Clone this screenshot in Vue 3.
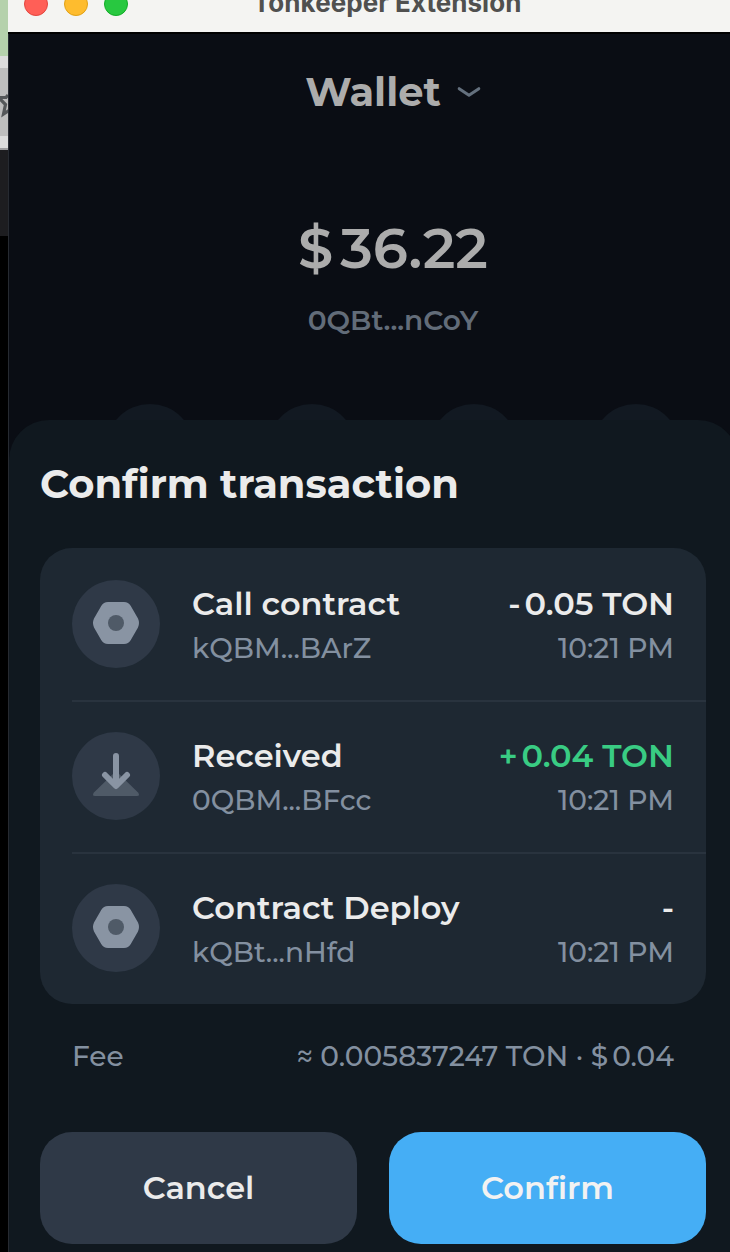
<script setup>
const circles = [1, 2, 3, 4]
const actions = [
  { icon: 'contract', title: 'Call contract', address: 'kQBM...BArZ', sign: '-', amount: '0.05 TON', kind: 'call' },
  { icon: 'receive', title: 'Received', address: '0QBM...BFcc', sign: '+', amount: '0.04 TON', kind: 'received' },
  { icon: 'contract', title: 'Contract Deploy', address: 'kQBt...nHfd', sign: '-', amount: '', kind: 'deploy' },
]
</script>

<template>
  <div class="desktop">
    <div class="backdrop">
      <div class="tabs"></div>
      <div class="toolbar">
        <svg width="8" height="68" viewBox="0 0 8 68"><path d="M-3 29.500 H6 L8 27 M0 31 L5.500 36.500 L3.500 46 L9 42.500" fill="none" stroke="#55585a" stroke-width="3.2" /></svg>
      </div>
      <div class="page"></div>
    </div>
    <div class="window">
      <header class="titlebar">
        <i class="light red"></i><i class="light yellow"></i><i class="light green"></i>
        <span class="caption">Tonkeeper Extension</span>
      </header>
      <main class="home">
        <div class="wallet">
          <span class="wallet-name">Wallet</span>
          <svg width="24" height="12" viewBox="0 0 24 12"><path d="M2.200 2.700 L12 9.200 L21.800 2.700" fill="none" stroke="#64707e" stroke-width="3" stroke-linecap="round" stroke-linejoin="round" /></svg>
        </div>
        <div class="balance"><span>$</span><span class="figure">36.22</span></div>
        <div class="address">0QBt...nCoY</div>
        <div class="circles"><i v-for="c in circles" :key="c"></i></div>
      </main>
      <section class="dialog">
        <h1>Confirm transaction</h1>
        <div class="card">
          <div v-for="a in actions" :key="a.title" class="row" :class="a.kind">
            <div class="icon">
              <svg v-if="a.icon === 'contract'" width="88" height="88" viewBox="0 0 88 88">
                <path d="M36 22 H52 Q56.500 22 58.800 26 L66 38.500 Q68 43 66 47.500 L58.800 60 Q56.500 64 52 64 H36 Q31.500 64 29.200 60 L22 47.500 Q20 43 22 38.500 L29.200 26 Q31.500 22 36 22 Z" fill="#8994a3" />
                <circle cx="44" cy="43" r="8" fill="#4f5a67" />
              </svg>
              <svg v-else width="88" height="88" viewBox="0 0 88 88">
                <path d="M44 39 L66.300 60.700 Q68.200 64 65 64 H23 Q19.800 64 21.700 60.700 Z" fill="#4f5a67" />
                <path d="M44 24 V53.500 M33 43 L44 54 L55 43" fill="none" stroke="#8994a3" stroke-width="6" stroke-linecap="round" stroke-linejoin="round" />
              </svg>
            </div>
            <div class="details">
              <div class="line strong"><span>{{ a.title }}</span><span class="value"><span>{{ a.sign }}</span><span v-if="a.amount" class="amount">{{ a.amount }}</span></span></div>
              <div class="line sub"><span>{{ a.address }}</span><span>10:21 PM</span></div>
            </div>
          </div>
        </div>
        <div class="fee"><span>Fee</span><span>≈ 0.005837247 TON · <span>$</span><span class="fiat">0.04</span></span></div>
        <div class="buttons">
          <button class="cancel">Cancel</button>
          <button class="confirm">Confirm</button>
        </div>
      </section>
    </div>
  </div>
</template>

<style>
html, body { margin: 0; background: #000; overflow: hidden; }
</style>

<style scoped>
.desktop { width: 730px; height: 1252px; display: flex; overflow: hidden; background: #000; font-family: Montserrat, Inter, sans-serif; white-space: nowrap; }
.backdrop { width: 8px; flex: none; }
.tabs { height: 56px; background: #b5d1ac; }
.toolbar { height: 68px; background: #bebebe; border-top: 12px solid #dcdcdc; border-bottom: 12px solid #dcdcdc; box-shadow: 0 2px #9c9c9e; overflow: hidden; }
.toolbar svg { display: block; }
.page { height: 86px; margin-top: 2px; background: #1d1d20; }
.window { width: 770px; height: 1252px; flex: none; background: linear-gradient(to right, #262a31 1px, #0a0d14 1px); }
.titlebar { height: 32px; display: flex; align-items: flex-start; background: #f4f4f2; border-bottom: 2px solid #000; overflow: hidden; }
.light { width: 24px; height: 24px; box-sizing: border-box; border-radius: 50%; margin: -8px 0 0 16px; }
.red { background: #ff5f57; border: 1px solid #e2463f; }
.yellow { background: #febc2e; border: 1px solid #e1a116; }
.green { background: #28c840; border: 1px solid #12ac28; }
.caption { margin: -13px 0 0 125px; line-height: 32px; font-family: Inter, sans-serif; font-size: 26px; font-weight: 700; letter-spacing: 0.05px; color: #50504f; }
.home { height: 386px; display: flex; flex-direction: column; align-items: center; overflow: hidden; }
.wallet { height: 48px; margin-top: 34px; display: flex; align-items: center; gap: 16px; color: #acacac; }
.wallet-name { font-size: 40px; line-height: 48px; font-weight: 700; }
.balance { height: 72px; line-height: 72px; margin-top: 96px; font-size: 56px; font-weight: 600; color: #acacac; }
.figure { margin-left: 7px; }
.address { margin-top: 18px; height: 36px; line-height: 36px; font-size: 28px; font-weight: 600; color: #626c79; }
.circles { display: flex; gap: 74px; margin-top: 66px; }
.circles i { width: 88px; height: 88px; border-radius: 50%; background: #121922; }
.dialog { width: 729px; height: 832px; margin-left: 1px; box-sizing: border-box; padding: 0 32px 0 31px; background: #10181f; border-radius: 40px 40px 0 0; }
h1 { margin: 0; padding-top: 40px; height: 88px; line-height: 48px; font-size: 40px; font-weight: 700; color: #ebebeb; }
.card { width: 666px; height: 456px; background: #1e2832; border-radius: 32px; overflow: hidden; }
.row { height: 152px; box-sizing: border-box; margin-left: 32px; padding: 32px 32px 0 0; display: flex; gap: 32px; }
.row + .row { border-top: 2px solid #29333e; padding-top: 30px; }
.icon { width: 88px; height: 88px; flex: none; border-radius: 50%; background: #2f3947; }
.icon svg { display: block; }
.details { flex: 1; }
.line { display: flex; justify-content: space-between; }
.strong { height: 48px; line-height: 48px; font-size: 32px; font-weight: 600; color: #ebebeb; }
.sub { height: 40px; line-height: 40px; font-size: 28px; font-weight: 500; color: #8390a0; }
.amount { margin-left: 4px; }
.received .value { color: #39cc83; }
.fee { height: 40px; line-height: 40px; margin: 32px 32px 0; display: flex; justify-content: space-between; font-size: 28px; font-weight: 500; color: #8390a0; }
.fiat { margin-left: 4px; }
.buttons { display: flex; gap: 32px; margin-top: 56px; }
button { width: 317px; height: 112px; padding: 0 0 2px; border: 0; border-radius: 32px; font-family: inherit; font-size: 32px; font-weight: 600; color: #ebebeb; }
.cancel { background: #2f3947; }
.confirm { background: #45aef5; color: #f2f2f2; }
</style>
